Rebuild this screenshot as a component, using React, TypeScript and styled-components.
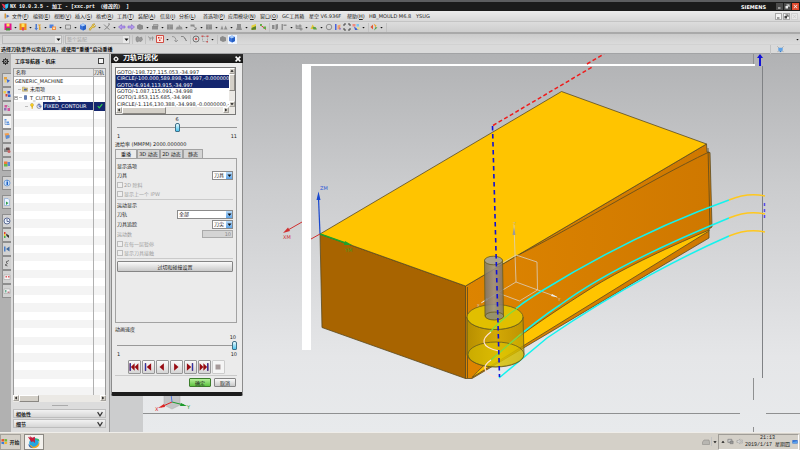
import React, { useState } from "react";
import styled, { createGlobalStyle, css } from "styled-components";

const GlobalStyle = createGlobalStyle`
  *, *::before, *::after { box-sizing: border-box; }
  html, body { margin: 0; padding: 0; }
  body { background: #cfd0d1; overflow: hidden; }
  body, button, input, select, table {
    font-family: "DejaVu Sans", "Noto Sans CJK SC", sans-serif;
    font-size: 5px;
    line-height: 6px;
    color: #222;
  }
  button, input, select { margin: 0; padding: 0; border: 0; border-radius: 0; }
`;

/* ---------- icons ---------- */

const drawings: Record<string, React.ReactNode> = {
  nx: (<><path d="M1 1l6 2 4 5-5 3z" fill="#e8344e" /><path d="M3 8l6 6H4z" fill="#2f7be0" /><path d="M8 3l7-2-1 8-5 4z" fill="#37c1f0" /></>),
  menu: (<><path d="M3 3h3v10H3z" fill="#d99a3c" /><path d="M7 5l6 3-6 4z" fill="#4b6fb5" /></>),
  magenta: (<><path d="M1 1h14v13H1z" fill="#e0148a" /><path d="M5 1h6v6H5z" fill="#ffe45a" /><path d="M4 10h8v5H4z" fill="#4a8a3d" /></>),
  orange: (<><path d="M1 1h14v13H1z" fill="#f08a16" /><path d="M5 1h6v7H5z" fill="#ffe45a" /><path d="M6 9h4v6H6z" fill="#d8456b" /></>),
  updown: (<><path d="M3 2h3v8h2l-3.500 5L1 10h2z" fill="#4d7ad0" /><path d="M8 3h6l-3 5z" fill="#e3a431" /><path d="M10 7h3v7h-3z" fill="#e3a431" /></>),
  blocks: (<><path d="M1 3h8v7H1z" fill="#4d80df" /><path d="M6 7h8v7H6z" fill="#f09048" /><path d="M8 9h4v3H8z" fill="#ffe3b0" /></>),
  square: <path d="M3 4h10v8H3z" fill="none" stroke="#777" strokeWidth="1.5" />,
  cube: (<><path d="M8 1l6 3v8l-6 3-6-3V4z" fill="#3b72d9" /><path d="M8 1l6 3-6 3-6-3z" fill="#a9cdfa" /><path d="M8 7l6-3v8l-6 3z" fill="#245fc4" /></>),
  wrench: <path d="M2 12l6-6c0-4 3-5 6-4l-3 3 2 2 2-2c0 3-3 5-6 4l-5 6z" fill="#ecc94e" stroke="#a58422" />,
  cut: <path d="M2 3l6 6 5-6M3 13l5-4 5 4M10 2h4" fill="none" stroke="#888" strokeWidth="2" />,
  left: <path d="M1 8l6-5v3h7v4H7v3z" fill="#b59bec" stroke="#7757c5" />,
  right: <path d="M15 8l-6-5v3H2v4h7v3z" fill="#b59bec" stroke="#7757c5" />,
  blob: <path d="M2 5l5-3 7 3v7l-6 2-6-3z" fill="#8b8b8b" />,
  machine: (<><path d="M2 6h12v7H2z" fill="#8f8f8f" /><path d="M5 3h9v4H5z" fill="#b0b0b0" stroke="#777" /></>),
  box: (<><path d="M2 3h12v10H2z" fill="#8d8d8d" /><path d="M2 6h12M7 3v10" stroke="#aaa" /></>),
  mound: <path d="M1 13l3-6 3 1 1-5 3 4 3 1 1 5z" fill="#969696" />,
  branch: (<><path d="M1 3h8v4H1z" fill="#8b8b8b" /><path d="M7 6l6 6M12 9v4H8" fill="none" stroke="#8b8b8b" strokeWidth="2" /></>),
  peaks: <path d="M1 13l3-8 3 8zM8 13l3-8 4 8z" fill="#909090" />,
  tower: <path d="M4 2h8v6l2 6H2l2-6z" fill="#919191" />,
  yellow: (<><path d="M3 5l9-3v11l-9 1z" fill="#e4d13b" /><path d="M3 10l9-4v7l-9 1z" fill="#59802c" /></>),
  pins: (<><path d="M2 3l12 10" stroke="#d33" strokeWidth="2" /><path d="M2 2h4v4H2zM9 7h5v5H9z" fill="#63ad46" /></>),
  flags: <path d="M2 4h5v8H2zM9 3l5-1v9l-3 3H9z" fill="#8b8b8b" />,
  ruler: <path d="M3 2h3v12H3zM7 3h6v3H7z" fill="#919191" />,
  tree: <path d="M2 3v8h10M2 6h5M8 4h4v4H8zM10 10h4v4h-4z" fill="#aaa" stroke="#8b8b8b" strokeWidth="1.5" />,
  hill: (<><path d="M1 12l4-9 4 5 5 4z" fill="#dfc436" /><path d="M5 8h6l3 5H7z" fill="#5ba248" /></>),
  ring: <circle cx="8" cy="8" r="5.5" fill="none" stroke="#777" strokeWidth="1.5" />,
  palette: (<><path d="M2 2h3v12H2z" fill="#4b62dc" /><path d="M7 5l6-2-1 9-5 1z" fill="#f2a16a" /><path d="M11 8l3 4-3 2z" fill="#7a56c9" /></>),
  expand: <path d="M2 6V2h4M10 2h4v4M14 10v4h-4M6 14H2v-4" fill="none" stroke="#444" strokeWidth="2" />,
  mosaic: (<><path d="M1 2h6v5H1z" fill="#f18a7d" /><path d="M9 2h5v5H9z" fill="#7ac5ef" /><path d="M4 7l10 7H6z" fill="#455fd1" /><path d="M10 9h5v4h-5z" fill="#eae286" /></>),
  diamond: (<><path d="M1 8l5-5v10z" fill="#e25534" /><path d="M7 1l6 4-2 4z" fill="#f0a331" /><path d="M8 15l7-6-4-1z" fill="#52a24d" /></>),
  gears: <path d="M2 5l4-2 3 3 4-2 2 5-3 4-4-1-4 2-2-4z" fill="#999" stroke="#777" />,
  probe: <path d="M2 3l5 4M6 11V6h8M11 3v8" fill="none" stroke="#999" strokeWidth="2" />,
  redsnap: (<><path d="M1 1h14v14H1z" fill="#ffe8e2" stroke="#cf4b43" strokeWidth="2" /><path d="M4 4h3v3H4zM9 5h3v2H9zM6 9h3v3H6z" fill="#d3342a" /></>),
  snap: <path d="M2 3c6 0 8 3 8 10M7 10l3 4 4-4" fill="none" stroke="#999" strokeWidth="2" />,
  arc: <path d="M2 3h5l6 9M9 5l4 7" fill="none" stroke="#888" strokeWidth="2" />,
  target: (<><circle cx="8" cy="8" r="6" fill="none" stroke="#555" strokeWidth="1.5" /><circle cx="8" cy="8" r="2" fill="#d33" /></>),
  marquee: (<><path d="M3 3h10v10H3z" fill="none" stroke="#777" strokeDasharray="2 1" /><path d="M1 1h4v3H1zM11 1h4v3h-4zM11 12h3v3h-3z" fill="#c55" /></>),
  gear: (<><circle cx="8" cy="8" r="4.5" fill="none" stroke="currentColor" strokeWidth="2.5" /><circle cx="8" cy="8" r="1.5" fill="currentColor" /><path d="M8 0v3M8 13v3M0 8h3M13 8h3M2.500 2.500l2 2M11.500 11.500l2 2M13.500 2.500l-2 2M4.500 11.500l-2 2" stroke="currentColor" strokeWidth="2" /></>),
  opnav: (<><path d="M2 2h6v5H2z" fill="#e9a43c" /><path d="M7 6l7 3-5 5z" fill="#3f6bd0" /><path d="M3 8h4v5H3z" fill="#f3cf62" /></>),
  assem: (<><path d="M1 2h5v5H1z" fill="#f0cc43" /><path d="M9 2h5v5H9z" fill="#3a52ba" /><path d="M5 8h4v5H5z" fill="#d8433b" /><path d="M10 9h5v5h-5z" fill="#3563c9" /></>),
  part: (<><path d="M3 2h5v5H3zM9 8h5v6H9z" fill="#d2569b" /><path d="M2 8h5v5H2z" fill="#8d6fb5" /><path d="M8 3l5 3" stroke="#777" /></>),
  nav: (<><path d="M3 2h4v3H3zM7 7h5v3H7zM7 11h6v3H7z" fill="#5f95df" /><path d="M4 5v8h3M4 8h3" fill="none" stroke="#4472b7" /></>),
  web: (<><path d="M3 3l8-1 3 8-8 4z" fill="#f29d4a" /><path d="M5 7l8-1v6l-7 2z" fill="#5a8fd8" /></>),
  tool: (<><path d="M2 5h12v7H2z" fill="#888" /><path d="M6 3h7v5H6z" fill="#5b4b4b" /><circle cx="12" cy="11" r="3" fill="#c66" /></>),
  color: (<><path d="M2 3h7v5H2z" fill="#f0793a" /><path d="M9 4h5v8H9z" fill="#5d86d9" /><path d="M2 8h7v5H2z" fill="#67b64b" /></>),
  info: (<><circle cx="8" cy="8" r="6" fill="#c9e0f9" stroke="#5a90d2" strokeWidth="1.5" /><path d="M7 3h3v2H7zM7 6h3v6H7z" fill="#1d5fc3" /></>),
  page: (<><path d="M3 1h7l3 3v11H3z" fill="#eaf3ff" stroke="#6a94cf" /><path d="M6 7l5 3-5 4z" fill="#2f9e4a" /></>),
  clock: (<><circle cx="8" cy="8" r="6" fill="#eef4ff" stroke="#5d6d95" strokeWidth="2" /><path d="M8 4v5h4" fill="none" stroke="#3c4b7a" strokeWidth="1.5" /></>),
  chart: (<><path d="M2 2h3v4H2z" fill="#e53c2f" /><path d="M2 6h3v4H2z" fill="#f1c82e" /><path d="M2 10h3v4H2z" fill="#45ad4b" /><path d="M6 5l6 4v5L7 10z" fill="#333" /></>),
  kform: (<><path d="M2 3h3v10H2z" fill="#4b7fc9" /><path d="M13 3L6 8l7 5z" fill="#41699c" /></>),
  hook: <path d="M12 3L6 6l3 3-5 3 5 2" fill="none" stroke="#666" strokeWidth="2" />,
  cardA: (<><path d="M2 4h12v9H2z" fill="#f5f5f5" stroke="#999" /><path d="M5 6h3v3H5zM10 6h3v3h-3z" fill="#df5a60" /></>),
  cardB: (<><path d="M2 4h12v9H2z" fill="#f5f5f5" stroke="#999" /><path d="M4 6h3v5H4z" fill="#6fae95" /><path d="M9 9h4v3H9z" fill="#bd7d86" /></>),
  folder: (<><path d="M1 3h6l1 2h7v9H1z" fill="#f3d97a" stroke="#8a7430" /><path d="M5 7h8v5H5z" fill="#4a62a8" /></>),
  cutter: (<><path d="M4 1h8v14H4z" fill="#31508f" /><path d="M7 1h2v14H7z" fill="#7b9bd8" /></>),
  key: (<><circle cx="8" cy="5" r="4" fill="#ffd51f" stroke="#a8820e" /><path d="M7 8h3v7H7z" fill="#e0a90c" /></>),
  contour: (<><circle cx="8" cy="9" r="5.500" fill="#e7ecff" stroke="#556" strokeWidth="1.500" /><path d="M8 1v8h6" fill="none" stroke="#2b4ab8" strokeWidth="2" /></>),
  check: <path d="M2 8l4 5 8-10" fill="none" stroke="#2ed14a" strokeWidth="3" />,
  windows: (<><path d="M1 3l6-1v6H1z" fill="#e5532d" /><path d="M8 2l6 1v5H8z" fill="#71b536" /><path d="M1 9h6v5l-6-1z" fill="#3a7bd8" /><path d="M8 9h6v4l-6 1z" fill="#f0b52a" /></>),
  app: (<><circle cx="8" cy="9" r="5.500" fill="#25a6df" /><path d="M5 12c2 3 7 1 9-4 1 4-2 7-6 7-3 0-5-1-6-4z" fill="#f5a623" /><path d="M8 5c3-2 7-1 6 3-1-2-3-3-6-3z" fill="#35b56b" /><path d="M2 10c-1 3 2 5 5 5-2-1-4-3-5-5z" fill="#2465c0" /><path d="M1 2l3 1-1-2 3 2 3-1v7L7 7 5 8z" fill="#c41a3a" /></>),
  keyboard: <path d="M1 8l3-4h10l1 4v5H1z" fill="#b8b6b1" stroke="#85837e" />,
  network: (<><path d="M2 3h9v7H2z" fill="#ccc" stroke="#777" strokeWidth="1.500" /><path d="M7 7h7v6H7z" fill="#999" stroke="#666" /></>),
  speaker: <path d="M2 6h3l4-4v12l-4-4H2zM11 5c2 2 2 4 0 6M13 3c3 3 3 7 0 10" fill="#ddd" stroke="#888" />,
  desktop: (<><path d="M1 3h14v9H1z" fill="#2a6ad0" /><path d="M2 8l12-3v6H2z" fill="#5aa3ec" /></>),
  full: (<><path d="M3 4h10v7H3z" fill="#5ea2e6" /><path d="M1 1l3 3M15 1l-3 3M1 14l3-3M15 14l-3-3" stroke="#666" /><path d="M6 11h4v3H6z" fill="#357dcc" /></>),
};

const Glyph = styled.svg<{ $size: number }>`
  width: ${(p) => p.$size}px;
  height: ${(p) => p.$size}px;
  flex: none;
  display: block;
`;

function Icon({ name, size = 8 }: { name: string; size?: number }) {
  return (
    <Glyph viewBox="0 0 16 16" $size={size} aria-hidden="true">
      {drawings[name]}
    </Glyph>
  );
}

type Dir = "up" | "down" | "left" | "right";
const arrowPath: Record<Dir, string> = {
  up: "M1 7h8L5 2z",
  down: "M1 3h8L5 8z",
  left: "M7 1v8L2 5z",
  right: "M3 1v8l5-4z",
};

function Arrow({ dir, size = 4 }: { dir: Dir; size?: number }) {
  return (
    <Glyph viewBox="0 0 10 10" $size={size} aria-hidden="true">
      <path d={arrowPath[dir]} fill="#111" />
    </Glyph>
  );
}

/* ---------- top bars ---------- */

const Window = styled.div`
  display: flex;
  flex-direction: column;
  height: 100vh;
`;

const TitleBar = styled.header`
  flex: none;
  display: flex;
  align-items: center;
  height: 11px;
  padding: 0 1px 0 1px;
  border-top: 2px solid #5c5d5f;
  background: #1b1b1b;
  color: #fff;
`;

const TitleText = styled.h1`
  flex: 1;
  margin: 0;
  padding-left: 1px;
  font: bold 5px/6px "Liberation Mono", "Noto Sans CJK SC", monospace;
  white-space: pre;
`;

const Brand = styled.strong`
  margin-right: 9px;
`;

const WindowButton = styled.button<{ $tone?: "dark" | "red" | "light" }>`
  display: grid;
  place-items: center;
  width: 7px;
  height: 7px;
  margin-left: 1px;
  background: #4b4b4b;
  color: #eee;
  ${(p) => p.$tone === "red" && css`background: #e0492c;`}
  ${(p) => p.$tone === "light" && css`background: #f4f4f4; color: #444; border: 1px solid #aaa;`}
  &:disabled { color: #ccc; border-color: #d0d0d0; background: #e8e8e8; }
`;

const MenuBar = styled.nav`
  flex: none;
  display: flex;
  align-items: center;
  height: 11px;
  padding: 0 2px 0 3px;
  background: linear-gradient(#ececec, #d8d8d8);
  border-bottom: 1px solid #c4c4c4;
`;

const MenuItem = styled.button<{ $wide: number }>`
  flex: none;
  width: ${(p) => p.$wide}px;
  margin-left: 1px;
  background: none;
  text-align: left;
  white-space: nowrap;
`;

const Spacer = styled.span`
  flex: 1;
`;

const ToolBar = styled.div`
  flex: none;
  display: flex;
  align-items: center;
  height: 11px;
  padding-left: 4px;
  background: linear-gradient(#dcdcdc, #cdcdcd);
  border-bottom: 1px solid #a9a9a9;
`;

const FilterBar = styled(ToolBar)`
  height: 12px;
  padding-left: 2px;
  padding-right: 1px;
  background: linear-gradient(#cbcbcb, #dbdbdb);
  border-top: 1px solid #a9a9a9;
  border-bottom: 1px solid #d2d2d2;
`;

const ToolButton = styled.button<{ $on?: boolean; $caret?: boolean }>`
  flex: none;
  display: flex;
  align-items: center;
  width: ${(p) => (p.$caret ? 15 : 9)}px;
  height: 9px;
  gap: 2px;
  background: ${(p) => (p.$on ? "#eef5ff" : "none")};
`;

const Divider = styled.span<{ $room?: number }>`
  flex: none;
  width: 1px;
  height: 9px;
  margin: 0 ${(p) => p.$room ?? 1}px;
  background: #c2c2c2;
`;

const PromptBar = styled.div`
  flex: none;
  display: flex;
  align-items: center;
  height: 9px;
  padding: 0 16px 0 1px;
  background: #dadada;
  border-bottom: 1px solid #a2a3a5;
  font-weight: bold;
  color: #111;
`;

const PromptText = styled.output`
  flex: 1;
`;

/* ---------- form pieces ---------- */

const SelectBox = styled.span<{ $wide: number; $off?: boolean }>`
  flex: none;
  display: flex;
  width: ${(p) => p.$wide}px;
  height: 9px;
  background: ${(p) => (p.$off ? "#d6d6d6" : "#fff")};
  border: 1px solid ${(p) => (p.$off ? "#b9b9b9" : "#8b8b8b")};
  select {
    flex: 1;
    min-width: 0;
    padding: 0 1px;
    appearance: none;
    background: none;
    color: ${(p) => (p.$off ? "#999" : "#222")};
  }
`;

const SelectCap = styled.span<{ $off?: boolean }>`
  display: grid;
  place-items: center;
  width: 6px;
  background: ${(p) => (p.$off ? "#e8e8e8" : "linear-gradient(#b9dcfb, #5ea3e6)")};
`;

function Choice({ label, options, wide, off }: { label: string; options: string[]; wide: number; off?: boolean }) {
  return (
    <SelectBox $wide={wide} $off={off}>
      <select aria-label={label} disabled={off}>
        {options.map((o) => <option key={o}>{o}</option>)}
      </select>
      <SelectCap $off={off}><Arrow dir="down" size={5} /></SelectCap>
    </SelectBox>
  );
}

const ScrollTrack = styled.div<{ $vertical?: boolean }>`
  flex: none;
  display: flex;
  flex-direction: ${(p) => (p.$vertical ? "column" : "row")};
  justify-content: space-between;
  ${(p) => (p.$vertical ? css`width: 6px;` : css`height: 7px;`)}
  background: #ebe9e5;
`;

const ScrollButton = styled.button`
  display: grid;
  place-items: center;
  width: 6px;
  height: 6px;
  background: #d4d0c8;
  border: 1px solid #a5a29c;
  border-top-color: #fff;
  border-left-color: #fff;
`;

const ScrollThumb = styled.span<{ $long: number; $vertical?: boolean }>`
  flex: none;
  ${(p) => (p.$vertical ? css`height: ${p.$long}px; margin-bottom: auto;` : css`width: ${p.$long}px; margin-right: auto;`)}
  background: #d4d0c8;
  border: 1px solid #8a8782;
  border-top-color: #fff;
  border-left-color: #fff;
`;

function Scroller({ thumb, vertical }: { thumb: number; vertical?: boolean }) {
  return (
    <ScrollTrack $vertical={vertical}>
      <ScrollButton aria-label={vertical ? "上" : "左"}><Arrow dir={vertical ? "up" : "left"} /></ScrollButton>
      <ScrollThumb $long={thumb} $vertical={vertical} />
      <ScrollButton aria-label={vertical ? "下" : "右"}><Arrow dir={vertical ? "down" : "right"} /></ScrollButton>
    </ScrollTrack>
  );
}

/* ---------- left side ---------- */

const Main = styled.main`
  flex: 1;
  display: flex;
  min-height: 0;
`;

const ResourceBar = styled.nav`
  flex: none;
  display: flex;
  flex-direction: column;
  align-items: flex-end;
  width: 11px;
  background: #b1b1b1;
`;

const BarGear = styled.button`
  display: grid;
  place-items: center;
  width: 11px;
  height: 19px;
  padding-bottom: 5px;
  background: none;
`;

const ResourceTab = styled.button<{ $on?: boolean; $gap?: number }>`
  display: grid;
  place-items: center;
  width: 9px;
  height: 14px;
  margin-top: ${(p) => p.$gap ?? 0}px;
  background: ${(p) => (p.$on ? "#f4f4f4" : "#d2d2d2")};
  border: 1px solid #8e8e8e;
  border-right: 0;
  border-radius: 1px 0 0 1px;
`;

const Navigator = styled.aside`
  flex: none;
  display: flex;
  flex-direction: column;
  width: 99px;
  padding: 0 3px 3px 2px;
  background: #dcdcdc;
  border-right: 1px solid #9c9c9c;
`;

const NavTitle = styled.div`
  display: flex;
  align-items: center;
  justify-content: space-between;
  height: 14px;
  padding: 0 2px;
  h2 { margin: 0; font-size: 5px; line-height: 6px; color: #111; }
`;

const Maximize = styled.button`
  width: 6px;
  height: 6px;
  background: #f5f5f5;
  border: 1px solid #444;
`;

const Tree = styled.table`
  flex: 1;
  display: flex;
  flex-direction: column;
  min-height: 0;
  background: #fff;
  border: 1px solid #9a9a9a;
  border-bottom: 0;
  thead { display: block; background: #e4e4e4; border-bottom: 1px solid #b5b5b5; }
  tbody { flex: 1; display: flex; flex-direction: column; min-height: 0; }
  tr { display: grid; grid-template-columns: 1fr 12px; }
  thead tr { height: 7px; }
  tbody tr { flex: 1 1 0; min-height: 0; }
  tbody tr:nth-child(even) { background: #f4f4f4; }
  th { padding: 0 0 0 2px; font-weight: normal; text-align: left; line-height: 7px; white-space: nowrap; }
  td { padding: 0; min-width: 0; }
  th + th, td + td { padding-left: 0; border-left: 1px solid #b0b0b0; }
`;

const TreeLabel = styled.span<{ $indent: number; $on?: boolean }>`
  display: flex;
  align-items: center;
  gap: 1px;
  height: 8px;
  padding-left: ${(p) => p.$indent}px;
  white-space: nowrap;
  b {
    flex: ${(p) => (p.$on ? 1 : "none")};
    padding: 1px;
    font-weight: normal;
    ${(p) => p.$on && css`background: #14266e; color: #fff;`}
  }
`;

const Branch = styled.span`
  flex: none;
  width: 3px;
  height: 1px;
  background: #bbb;
`;

const Expander = styled.button`
  flex: none;
  width: 4px;
  height: 4px;
  background: linear-gradient(#999, #999) center / 2px 1px no-repeat #fff;
  border: 1px solid #bbb;
`;

const PathCell = styled.td<{ $on?: boolean }>`
  display: grid;
  place-items: center;
  background: ${(p) => (p.$on ? "#14266e" : "none")};
`;

const Grip = styled.div`
  align-self: center;
  width: 16px;
  height: 1px;
  margin: 3px 0;
  background: #aaa;
`;

const Section = styled.button`
  display: flex;
  align-items: center;
  justify-content: space-between;
  height: 9px;
  margin-bottom: 1px;
  padding: 0 2px;
  background: linear-gradient(#f2f2f2, #d6d6d6);
  border: 1px solid #bdbdbd;
  font-weight: bold;
`;

/* ---------- viewport and dialog ---------- */

const Viewport = styled.section`
  position: relative;
  flex: 1;
  min-width: 0;
  overflow: hidden;
  background: linear-gradient(#b1b2b4, #cbccce 35%, #e5e6e8 80%, #e8eaec);
`;

const SceneSvg = styled.svg`
  display: block;
  width: 100%;
  height: 100%;
`;

const Dialog = styled.section`
  position: absolute;
  top: 0;
  left: 1px;
  width: 132px;
  background: #ebebeb;
  border: 1px solid #8c8c8c;
  border-top: 0;
  border-bottom: 4px solid #1c1c1c;
  border-radius: 0 0 2px 2px;
`;

const DialogTitle = styled.div`
  display: flex;
  align-items: center;
  gap: 4px;
  height: 9px;
  margin: 0 -1px;
  padding: 0 2px;
  background: linear-gradient(#2b2b2b, #141414);
  color: #fff;
  h2 { flex: 1; margin: 0; font-size: 7px; line-height: 9px; font-weight: bold; color: #fff; }
`;

const PlainButton = styled.button`
  display: grid;
  place-items: center;
  width: 6px;
  height: 8px;
  background: none;
  color: #fff;
`;

const DialogBody = styled.div`
  display: flex;
  flex-direction: column;
  padding: 4px 5px 3px 3px;
`;

const EventBox = styled.div`
  display: grid;
  grid-template-columns: 1fr 6px;
  grid-template-rows: 39px 7px;
  height: 48px;
  margin-right: 1px;
  background: #ebe9e5;
  border: 1px solid #777;
`;

const EventList = styled.ul`
  display: grid;
  grid-auto-rows: 1fr;
  margin: 0;
  padding: 1px 0 0;
  min-width: 0;
  overflow: hidden;
  list-style: none;
  background: #fff;
`;

const EventRow = styled.li<{ $on: boolean }>`
  padding-left: 1px;
  white-space: nowrap;
  overflow: hidden;
  ${(p) => p.$on && css`background: #14266e; color: #fff;`}
`;

const SliderBlock = styled.div`
  display: flex;
  flex-direction: column;
  padding: 1px 0 0 2px;
`;

const SliderValue = styled.output<{ $end?: boolean }>`
  height: 6px;
  text-align: ${(p) => (p.$end ? "right" : "center")};
  padding-right: ${(p) => (p.$end ? 1 : 0)}px;
`;

const Range = styled.input`
  appearance: none;
  width: 100%;
  height: 10px;
  background: linear-gradient(#999, #999) center / 100% 1px no-repeat;
  &::-webkit-slider-thumb {
    appearance: none;
    width: 5px;
    height: 9px;
    border: 1px solid #3e7088;
    border-radius: 2px 2px 1px 1px;
    background: linear-gradient(#e9fbff, #4dc4ee);
  }
`;

const Ends = styled.div`
  display: flex;
  justify-content: space-between;
  height: 8px;
  line-height: 8px;
`;

const Line = styled.p<{ $top?: number }>`
  margin: ${(p) => p.$top ?? 0}px 0 0;
  height: 7px;
  line-height: 7px;
`;

const Tabs = styled.div`
  display: flex;
  height: 9px;
  margin-top: 1px;
`;

const Tab = styled.button<{ $on: boolean; $wide: number }>`
  width: ${(p) => p.$wide}px;
  background: ${(p) => (p.$on ? "#ebebeb" : "#d5d5d5")};
  border: 1px solid #a2a2a2;
  border-bottom: 0;
  border-radius: 1px 1px 0 0;
  white-space: nowrap;
`;

const Panel = styled.div`
  display: flex;
  flex-direction: column;
  min-height: 165px;
  padding: 4px 3px 0 1px;
  border: 1px solid #a2a2a2;
`;

const Field = styled.div<{ $off?: boolean }>`
  display: flex;
  align-items: center;
  justify-content: space-between;
  height: 10px;
  color: ${(p) => (p.$off ? "#999" : "#222")};
`;

const Tick = styled.label`
  display: flex;
  align-items: center;
  gap: 1px;
  height: 9px;
  color: #a0a0a0;
  input {
    appearance: none;
    width: 6px;
    height: 6px;
    background: #efefef;
    border: 1px solid #bcbcbc;
  }
`;

const NumberBox = styled.input`
  width: 31px;
  height: 8px;
  padding: 0 1px;
  background: #d4d4d4;
  border: 1px solid #aaa;
  color: #888;
  text-align: right;
`;

const Rule = styled.hr`
  width: 100%;
  height: 1px;
  margin: 1px 0 2px;
  border: 0;
  background: #cacaca;
`;

const PushButton = styled.button<{ $wide?: number; $ok?: boolean }>`
  width: ${(p) => (p.$wide ? `${p.$wide}px` : "100%")};
  height: ${(p) => (p.$wide ? 9 : 11)}px;
  background: linear-gradient(#fafafa, #c9c9c9);
  border: 1px solid #858585;
  border-radius: 1px;
  ${(p) => p.$ok && css`background: linear-gradient(#b5f09a, #5ec340); border-color: #3d7d2c;`}
`;

const PlayRow = styled.div`
  display: flex;
  justify-content: center;
  gap: 1px;
  margin-top: 2px;
`;

const PlayButton = styled.button`
  display: grid;
  place-items: center;
  width: 13px;
  height: 14px;
  background: linear-gradient(#fafafa, #d5d5d5);
  border: 1px solid #979797;
  border-radius: 1px;
  &:disabled { background: #f5f5f5; border-color: #ccc; }
`;

const Actions = styled.div`
  display: flex;
  justify-content: flex-end;
  gap: 3px;
  padding-right: 1px;
  padding-bottom: 2px;
`;

/* ---------- taskbar ---------- */

const TaskBar = styled.footer`
  flex: none;
  display: flex;
  align-items: center;
  height: 18px;
  padding-right: 1px;
  background: #d4d0c8;
  border-top: 1px solid #efede9;
`;

const TaskButton = styled.button<{ $on?: boolean }>`
  display: flex;
  align-items: center;
  justify-content: center;
  gap: 1px;
  width: ${(p) => (p.$on ? 20 : 21)}px;
  height: 16px;
  margin-right: 3px;
  background: ${(p) => (p.$on ? "#f3f1ed" : "#d4d0c8")};
  border: 1px solid ${(p) => (p.$on ? "#8b8882" : "#a5a29b")};
  font-weight: bold;
  white-space: nowrap;
`;

const Tray = styled.div`
  display: flex;
  align-items: center;
  gap: 2px;
  height: 16px;
  padding: 0 0 0 2px;
  border: 1px solid #a09d97;
  border-right-color: #fff;
  border-bottom-color: #fff;
`;

const TrayTools = styled.div`
  display: flex;
  align-items: center;
  gap: 1px;
  padding-right: 1px;
`;

const Clock = styled.time`
  font: 5px/7px "Liberation Mono", "Noto Sans CJK SC", monospace;
  text-align: center;
  white-space: pre;
`;

/* ---------- data ---------- */

const menus: [string, string, number][] = [
  ["文件", "F", 20], ["编辑", "E", 20], ["视图", "V", 20], ["插入", "S", 20], ["格式", "R", 20],
  ["工具", "T", 20], ["装配", "A", 21], ["信息", "I", 18], ["分析", "L", 23], ["首选项", "P", 24],
  ["应用模块", "N", 31], ["窗口", "O", 21], ["GC工具箱", "", 26], ["星空 V6.936F", "", 37],
  ["帮助", "H", 21], ["HB_MOULD M6.8", "", 46], ["YSUG", "", 20],
];

const toolNames = [
  "magenta*", "orange*", "updown*", "blocks*", "square*", "cube", "wrench*", "cut*", "left", "right",
  "blob*", "machine*", "box", "mound*", "branch*", "box*", "peaks*", "tower*", "yellow", "pins", "|",
  "flags", "ruler*", "tree*", "hill*", "ring", "palette", "expand", "mosaic*", "|", "diamond*", "|",
];
const filterNames = ["gears", "|", "probe", "redsnap*", "snap", "arc", "|", "target", "marquee*", "|", "blob", "cube!"];

const resources: [string, number][] = [
  ["opnav", 0], ["assem", 0], ["part", 0], ["nav", 0], ["web", 0], ["tool", 0], ["color", 0], ["info", 5],
  ["page", 5], ["clock", 5], ["chart", 0], ["kform", 0], ["hook", 0], ["cardA", 0], ["cardB", 0],
];

const events = [
  "GOTO/-198.727,115.053,-34.997",
  "CIRCLE/-100.000,589.898,-34.997,-0.0000000",
  "GOTO/-6.914,113.915,-34.997",
  "GOTO/-1.087,115.091,-34.998",
  "GOTO/1.853,115.685,-34.998",
  "CIRCLE/-1.116,130.388,-34.998,-0.0000000,-0",
];

const tabs: [string, number][] = [["重播", 22], ["3D 动态", 23], ["2D 动态", 23], ["静态", 20]];

const players: [string, string][] = [
  ["倒回到开头", "M1 2h2v12H1zM9 2v12L3 8zM15 2v12L9 8z"],
  ["单步向后", "M3 2h2v12H3zM13 2v12L6 8z"],
  ["反向播放", "M11 2v12L4 8z"],
  ["播放", "M5 2v12l7-6z"],
  ["单步向前", "M11 2h2v12h-2zM3 2v12l7-6z"],
  ["前进到结尾", "M13 2h2v12h-2zM1 2v12l6-6zM7 2v12l6-6z"],
];
const playerBars = ["M1 2h2v12H1z", "M3 2h2v12H3z", "", "", "M11 2h2v12h-2z", "M13 2h2v12h-2z"];

function ToolSet({ names }: { names: string[] }) {
  return (
    <>
      {names.map((n, i) => {
        if (n === "|") return <Divider key={i} />;
        const key = n.replace(/[*!]/, "");
        return (
          <ToolButton key={i} $caret={n.endsWith("*")} $on={n.endsWith("!")} aria-label={key}>
            <Icon name={key} />
            {n.endsWith("*") && <Arrow dir="down" size={3} />}
          </ToolButton>
        );
      })}
    </>
  );
}

function Scene() {
  return (
    <SceneSvg viewBox="110 54 690 378" preserveAspectRatio="xMidYMin slice" role="img" aria-label="刀轨">
      <defs>
        <linearGradient id="side" x1="0" x2="1"><stop offset="0" stopColor="#dd8400" /><stop offset="1" stopColor="#cf7800" /></linearGradient>
        <linearGradient id="shank" x1="0" x2="1"><stop offset="0" stopColor="#77716c" /><stop offset=".5" stopColor="#9a948f" /><stop offset="1" stopColor="#7c746e" /></linearGradient>
        <linearGradient id="body" x1="0" x2="1"><stop offset="0" stopColor="#a99200" /><stop offset=".5" stopColor="#d0b808" /><stop offset="1" stopColor="#b59a00" /></linearGradient>
      </defs>
      <rect x="110" y="54" width="33" height="378" fill="#cccdce" />
      <path d="M143 413.500H740M766 413.500H800" stroke="#8f9091" />
      <path d="M753.500 54v10M753.500 378v22M753.500 427v6" stroke="#8f9091" />
      <path d="M302 64H755v2H311V350h-9z" fill="#fff" />
      <path d="M762.500 66V378" stroke="#808285" />
      <path d="M760 55v11" stroke="#1212d8" strokeWidth="2" />
      <path d="M757 58l3-4 3 4z" fill="#1212d8" />

      <g stroke="#5a4a20" strokeWidth=".8" strokeLinejoin="round">
        <path d="M320 234L322 327.500 465.500 378.500V286z" fill="#a86400" />
        <path d="M465.500 286L706.500 144 707 152 710 152.500 712 227 709 229V238L472 378.500H465.500z" fill="url(#side)" />
        <path d="M320 234L561.500 91.500 706.500 144 465.500 286z" fill="#ffc400" />
        <path d="M709 230C660 251 620 270 590 289S500 346 472 377.500L709 231z" fill="#ffc400" />
        <path d="M520 254C560 235 650 180 709 152M708 148L710 228M467.500 287V378" fill="none" />
      </g>

      <g fill="none" stroke="#d9cfc0" strokeWidth=".8">
        <path d="M516 282L514 225M516 282L557 297M516 282L481 303M516 255L537 262 537.500 290 519.500 301 498 293M516 255L499 265" />
      </g>
      <path d="M512.500 235L514 227 515.500 235z" fill="#9a9a9a" />
      <path d="M551 296L558 297.500 552 294zM481 303L487 298 488 300z" fill="#eee" />
      <text x="558" y="301" fontSize="4" fill="#d9cfc0">Y</text>
      <text x="477" y="307" fontSize="4" fill="#d9cfc0">X</text>
      <text x="513" y="225" fontSize="4" fill="#c9b88c">Z</text>

      <g fill="none" stroke="#12f3ee" strokeWidth="1.500">
        <path d="M729 200C675 219 608 250 540 292 520 304 505 316 490 332" />
        <path d="M729 218C690 234 610 268 560 305 540 318 520 334 491 360" />
        <path d="M729 236C690 253 620 288 547 338L499 378" />
      </g>
      <g fill="none" stroke="#ffc81e" strokeWidth="1.500">
        <path d="M729 200Q748 192 765 196" />
        <path d="M729 218Q748 210 765 214" />
        <path d="M729 236Q748 228 765 232" />
      </g>
      <path d="M764.500 203v16" stroke="#5548e8" strokeWidth="1.500" strokeDasharray="3 3" />

      <g stroke="#665c1e" strokeWidth=".8">
        <path d="M467 317V354a28 12.500 0 0 0 57 0L523 317a28 12.500 0 0 1-56 0z" fill="url(#body)" fillOpacity=".72" />
        <ellipse cx="495" cy="317" rx="28" ry="12.500" fill="#e2ce00" fillOpacity=".8" />
        <ellipse cx="496" cy="354.500" rx="28" ry="12.500" fill="#e2ce00" fillOpacity=".45" />
        <path d="M484.500 260L485 316a9.300 4 0 0 0 18.500 0L502.500 260z" fill="url(#shank)" fillOpacity=".85" />
        <ellipse cx="493.500" cy="260.500" rx="9" ry="4.300" fill="#a9a28c" />
        <ellipse cx="494.500" cy="316" rx="9.300" ry="4" fill="#97916a" />
      </g>
      <path d="M518 308Q502 318 490 332M521 334L491 360" fill="none" stroke="#86d83a" strokeWidth="1.200" />
      <path d="M491 332C481 339 480 347 499 351M491 360C482 366 482 373 498 378" fill="none" stroke="#ffe1d6" strokeWidth="1.200" />

      <path d="M492.500 126L499.500 377" stroke="#1010d6" strokeWidth="1.600" strokeDasharray="4.500 3.500" />
      <path d="M493 125.500L593 66.500M587 64L604 54" stroke="#ef1a1a" strokeWidth="1.500" strokeDasharray="4 2.500" />

      <path d="M320 234L318.500 198" stroke="#1747cf" strokeWidth="1.200" />
      <path d="M316.500 200L318.500 191.500 320.500 200z" fill="#1747cf" />
      <path d="M320 234L311 239M302 222L288 230" stroke="#cf2f2f" />
      <path d="M283 233L288 227.500 290 231z" fill="#cf2f2f" />
      <path d="M320 234L347 243.500" stroke="#1fa32b" strokeWidth="1.500" />
      <path d="M345 241L352 245 344 245z" fill="#1fa32b" />
      <g fontSize="5">
        <text x="320" y="190" fill="#2b57d6">ZM</text>
        <text x="283" y="239" fill="#cf2f2f">XM</text>
        <text x="345" y="252" fill="#3f9a1a">YM</text>
      </g>

      <path d="M164 394L172 391 180 394V405L172 409 164 405z" fill="#c3c4c6" stroke="#aaa" strokeWidth=".5" />
      <path d="M172 402L161 407" stroke="#d22" /><path d="M158 408l6-4 1 3z" fill="#d22" />
      <path d="M172 402L184 405" stroke="#1d9a2c" /><path d="M187 406l-6-3-1 3z" fill="#1d9a2c" />
      <path d="M172 402L171 394" stroke="#5577dd" />
      <g fontSize="5"><text x="155" y="411" fill="#d22">X</text><text x="187" y="409" fill="#1d9a2c">Y</text></g>
    </SceneSvg>
  );
}

function PathDialog() {
  const [tab, setTab] = useState(0);
  const [step, setStep] = useState(6);
  const [speed, setSpeed] = useState(10);
  return (
    <Dialog aria-label="刀轨可视化">
      <DialogTitle>
        <PlainButton aria-label="选项"><Icon name="gear" size={6} /></PlainButton>
        <h2>刀轨可视化</h2>
        <PlainButton aria-label="关闭">
          <Glyph viewBox="0 0 10 10" $size={6}><path d="M1 1l8 8M9 1L1 9" stroke="#fff" strokeWidth="2.500" /></Glyph>
        </PlainButton>
      </DialogTitle>
      <DialogBody>
        <EventBox>
          <EventList>
            {events.map((e, i) => <EventRow key={e} $on={i === 1 || i === 2}>{e}</EventRow>)}
          </EventList>
          <Scroller vertical thumb={17} />
          <Scroller thumb={44} />
        </EventBox>
        <SliderBlock>
          <SliderValue>{step}</SliderValue>
          <Range type="range" min={1} max={11} value={step} aria-label="运动" onChange={(e) => setStep(+e.target.value)} />
          <Ends><span>1</span><span>11</span></Ends>
        </SliderBlock>
        <Line $top={1}>进给率 (MMPM) 2000.000000</Line>
        <Tabs role="tablist">
          {tabs.map(([t, w], i) => (
            <Tab key={t} role="tab" aria-selected={tab === i} $on={tab === i} $wide={w} onClick={() => setTab(i)}>{t}</Tab>
          ))}
        </Tabs>
        <Panel role="tabpanel">
          <Line>显示选项</Line>
          <Field>刀具<Choice label="刀具" options={["刀具"]} wide={21} /></Field>
          <Tick><input type="checkbox" disabled />2D 除料</Tick>
          <Tick><input type="checkbox" disabled />显示上一个 IPW</Tick>
          <Rule />
          <Line>运动显示</Line>
          <Field>刀轨<Choice label="刀轨" options={["全部"]} wide={56} /></Field>
          <Field>刀具追踪<Choice label="刀具追踪" options={["刀尖"]} wide={21} /></Field>
          <Field as="label" $off>运动数<NumberBox value="10" disabled readOnly /></Field>
          <Tick><input type="checkbox" disabled />在每一层暂停</Tick>
          <Tick><input type="checkbox" disabled />显示刀具接触</Tick>
          <Rule />
          <PushButton>过切和碰撞设置</PushButton>
        </Panel>
        <Line $top={3}>动画速度</Line>
        <SliderBlock>
          <SliderValue $end>{speed}</SliderValue>
          <Range type="range" min={1} max={10} value={speed} aria-label="动画速度" onChange={(e) => setSpeed(+e.target.value)} />
          <Ends><span>1</span><span>10</span></Ends>
        </SliderBlock>
        <PlayRow>
          {players.map(([label, d], i) => (
            <PlayButton key={label} aria-label={label}>
              <Glyph viewBox="0 0 16 16" $size={10}><path d={d} fill="#970b12" /><path d={playerBars[i]} fill="#2b37a8" /></Glyph>
            </PlayButton>
          ))}
          <PlayButton aria-label="停止" disabled>
            <Glyph viewBox="0 0 16 16" $size={8}><path d="M3 3h10v10H3z" fill="#a69a9a" /></Glyph>
          </PlayButton>
        </PlayRow>
        <Rule />
        <Actions>
          <PushButton $wide={22} $ok>确定</PushButton>
          <PushButton $wide={22}>取消</PushButton>
        </Actions>
      </DialogBody>
    </Dialog>
  );
}

function WinGlyph({ kind }: { kind: "min" | "restore" | "close" }) {
  const d = { min: "M2 7h5v2H2z", restore: "M3 1h6v5H7V3H3zM1 4h5v5H1z", close: "M1 2l1-1 3 3 3-3 1 1-3 3 3 3-1 1-3-3-3 3-1-1 3-3z" }[kind];
  return <Glyph viewBox="0 0 10 10" $size={5}><path d={d} fill="currentColor" /></Glyph>;
}

export default function App() {
  return (
    <Window>
      <GlobalStyle />
      <TitleBar>
        <Icon name="nx" />
        <TitleText>{"NX 10.0.3.5 - 加工 - [xxc.prt （修改的） ]"}</TitleText>
        <Brand>SIEMENS</Brand>
        <WindowButton aria-label="最小化"><WinGlyph kind="min" /></WindowButton>
        <WindowButton aria-label="还原"><WinGlyph kind="restore" /></WindowButton>
        <WindowButton aria-label="关闭" $tone="red"><WinGlyph kind="close" /></WindowButton>
      </TitleBar>
      <MenuBar>
        <Icon name="menu" />
        {menus.map(([name, key, w]) => (
          <MenuItem key={name} $wide={w}>{name}{key && <>(<u>{key}</u>)</>}</MenuItem>
        ))}
        <Spacer />
        <WindowButton aria-label="最小化" $tone="light"><WinGlyph kind="min" /></WindowButton>
        <WindowButton aria-label="还原" $tone="light"><WinGlyph kind="restore" /></WindowButton>
        <WindowButton aria-label="关闭" $tone="light" disabled><WinGlyph kind="close" /></WindowButton>
      </MenuBar>
      <ToolBar><ToolSet names={toolNames} /></ToolBar>
      <FilterBar>
        <Choice label="类型过滤器" options={[""]} wide={60} off />
        <Divider />
        <Choice label="选择范围" options={["整个装配"]} wide={65} off />
        <Divider $room={2} />
        <ToolSet names={filterNames} />
        <Spacer />
        <Arrow dir="down" size={3} />
      </FilterBar>
      <PromptBar>
        <PromptText>选择刀轨事件以定位刀具，或使用“重播”启动重播</PromptText>
        <Divider $room={6} />
        <Icon name="full" size={7} />
      </PromptBar>
      <Main>
        <ResourceBar>
          <BarGear aria-label="设置"><Icon name="gear" size={7} /></BarGear>
          {resources.map(([name, gap]) => (
            <ResourceTab key={name} $gap={gap} $on={name === "nav"} aria-label={name}><Icon name={name} /></ResourceTab>
          ))}
        </ResourceBar>
        <Navigator>
          <NavTitle><h2>工序导航器 - 机床</h2><Maximize aria-label="最大化" /></NavTitle>
          <Tree>
            <thead><tr><th>名称</th><th>刀轨</th></tr></thead>
            <tbody>
              <tr><td><TreeLabel $indent={0}><b>GENERIC_MACHINE</b></TreeLabel></td><td /></tr>
              <tr><td><TreeLabel $indent={4}><Branch /><Icon name="folder" size={6} /><b>未用项</b></TreeLabel></td><td /></tr>
              <tr><td><TreeLabel $indent={0}><Expander aria-label="折叠" /><Branch /><Icon name="cutter" size={5} /><b>T_CUTTER_1</b></TreeLabel></td><td /></tr>
              <tr>
                <td><TreeLabel $indent={11} $on><Branch /><Icon name="key" size={6} /><Icon name="contour" size={6} /><b>FIXED_CONTOUR</b></TreeLabel></td>
                <PathCell $on><Icon name="check" size={6} /></PathCell>
              </tr>
              {Array.from({ length: 34 }, (_, i) => <tr key={i}><td /><td /></tr>)}
            </tbody>
          </Tree>
          <Scroller thumb={20} />
          <Grip />
          <Section>相依性<Glyph viewBox="0 0 10 10" $size={6}><path d="M1 2l4 6 4-6" fill="none" stroke="#333" strokeWidth="2" /></Glyph></Section>
          <Section>细节<Glyph viewBox="0 0 10 10" $size={6}><path d="M1 2l4 6 4-6" fill="none" stroke="#333" strokeWidth="2" /></Glyph></Section>
        </Navigator>
        <Viewport>
          <Scene />
          <PathDialog />
        </Viewport>
      </Main>
      <TaskBar>
        <TaskButton><Icon name="windows" size={7} />开始</TaskButton>
        <TaskButton $on aria-label="NX"><Icon name="app" size={14} /></TaskButton>
        <Spacer />
        <TrayTools><Icon name="keyboard" /><Divider $room={0} /><Arrow dir="down" size={4} /></TrayTools>
        <Tray>
          <Arrow dir="up" size={4} />
          <Icon name="network" size={7} />
          <Icon name="speaker" size={7} />
          <Clock>{"21:13\n2019/1/17 星期四"}</Clock>
          <Icon name="desktop" size={6} />
        </Tray>
      </TaskBar>
    </Window>
  );
}
